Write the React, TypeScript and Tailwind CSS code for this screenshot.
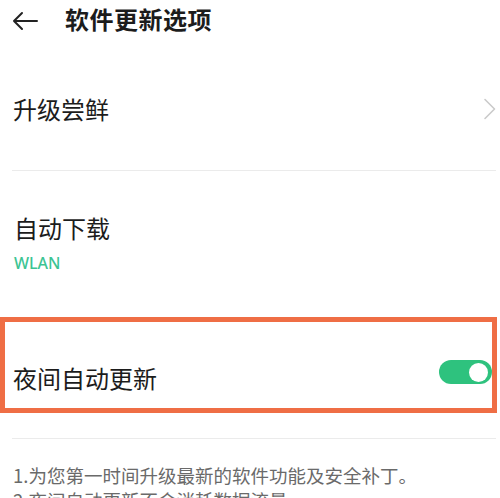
const cjk = "font-['Noto_Sans_CJK_SC','Noto_Sans',sans-serif]";

function Toggle({ on }: { on: boolean }) {
  return (
    <span
      className={`flex h-[24px] w-[53px] items-center rounded-full px-[4px] ${
        on ? "justify-end bg-[#2ec27e]" : "justify-start bg-[#d9d9d9]"
      }`}
    >
      <span className="h-[19px] w-[19px] rounded-full bg-white" />
    </span>
  );
}

export default function App() {
  return (
    <div className={`flex h-[498px] w-[500px] flex-col overflow-hidden bg-white text-[#1c1c1c] ${cjk}`}>
      {/* header */}
      <div className="flex h-[38px] shrink-0 items-center pl-[12px]">
        <svg width="26" height="20" viewBox="0 0 26 20" fill="none" className="mt-[3px]">
          <path d="M25 10H2M10 2L2 10L10 18" stroke="#222" strokeWidth="2" strokeLinecap="round" strokeLinejoin="round" />
        </svg>
        <h1 className="ml-[27px] text-[24px] font-semibold leading-[30px] tracking-[0.5px]">软件更新选项</h1>
      </div>

      {/* 升级尝鲜 */}
      <div className="flex h-[132px] shrink-0 items-center justify-between pl-[13px] pr-[3px] pt-[10px]">
        <span className="text-[24px] leading-[30px]">升级尝鲜</span>
        <svg width="14" height="22" viewBox="0 0 14 22" fill="none">
          <path d="M2 1.5L11.5 11L2 20.5" stroke="#cacaca" strokeWidth="1.6" strokeLinecap="round" strokeLinejoin="round" />
        </svg>
      </div>
      <div className="ml-[12px] mr-[4px] h-px shrink-0 bg-[#ebebeb]" />

      {/* 自动下载 */}
      <div className="flex h-[146px] shrink-0 flex-col pl-[14px] pt-[42px]">
        <span className="text-[24px] leading-[30px]">自动下载</span>
        <span className="mt-[10px] font-['Noto_Sans',sans-serif] text-[16px] font-medium leading-[20px] text-[#3cc493]">
          WLAN
        </span>
      </div>

      {/* 夜间自动更新 (highlighted) */}
      <div className="mr-[3px] flex h-[96px] shrink-0 items-start justify-between border-[5px] border-[#ef6e45] pl-[8px]">
        <span className="mt-[41px] text-[24px] leading-[30px]">夜间自动更新</span>
        <span className="mt-[38px]">
          <Toggle on />
        </span>
      </div>

      <div className="ml-[12px] mr-[4px] mt-[25px] h-px shrink-0 bg-[#ebebeb]" />

      {/* footer notes */}
      <div className="mt-[24px] shrink-0 pl-[13px] text-[18.5px] leading-[25px] text-[#6a6a6a]">
        <p>1.为您第一时间升级最新的软件功能及安全补丁。</p>
        <p>2.夜间自动更新不会消耗数据流量。</p>
      </div>
    </div>
  );
}
